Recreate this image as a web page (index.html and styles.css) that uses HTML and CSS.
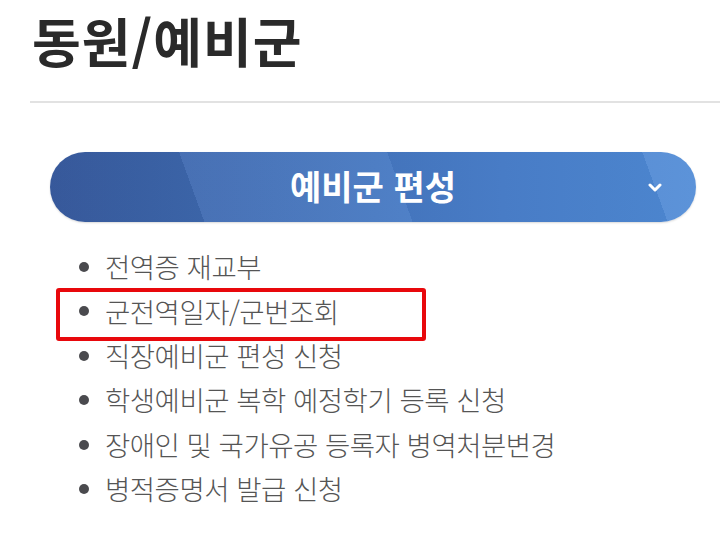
FILE: index.html
```html
<!DOCTYPE html>
<html lang="ko">
<head>
  <meta charset="UTF-8" />
  <meta name="viewport" content="width=device-width, initial-scale=1.0" />
  <title>동원/예비군</title>
  <link rel="stylesheet" href="styles.css">
</head>
<body>
  <header class="page-head">
    <h1>동원/예비군</h1>
  </header>

  <section class="menu-group">
    <button class="menu-toggle">
      <span class="menu-title">예비군 편성</span>
      <svg class="chevron" width="14" height="10" viewBox="0 0 14 10">
        <path d="M2 2 L7 7 L12 2" fill="none" stroke="#fff" stroke-width="3" stroke-linecap="round" stroke-linejoin="round"/>
      </svg>
    </button>
    <ul class="menu-list">
      <li><a href="#">전역증 재교부</a></li>
      <li class="marked"><a href="#">군전역일자/군번조회</a></li>
      <li><a href="#">직장예비군 편성 신청</a></li>
      <li><a href="#">학생예비군 복학 예정학기 등록 신청</a></li>
      <li><a href="#">장애인 및 국가유공 등록자 병역처분변경</a></li>
      <li><a href="#">병적증명서 발급 신청</a></li>
    </ul>
  </section>
</body>
</html>
```

FILE: styles.css
```css
body {
  margin: 0;
  font-family: "Noto Sans CJK KR", "Noto Sans", sans-serif;
  background-color: #FFFFFF;
  color: #333;
}
.page-head {
  margin-left: 30px;
  padding: 4px 0 25px 2px;
  border-bottom: 2px solid #E2E2E2;
}
.page-head h1 {
  margin: 0;
  font-size: 53px;
  font-weight: 700;
  line-height: 72px;
  letter-spacing: 1px;
  color: #2A2A2A;
}
.menu-group {
  padding: 49px 25px 0 50px;
}
.menu-toggle {
  position: relative;
  overflow: hidden;
  width: 646px;
  height: 70px;
  border: none;
  border-radius: 35px;
  display: flex;
  align-items: center;
  justify-content: center;
  background: linear-gradient(90deg, #3A5EA4 0%, #4170B8 35%, #4A80CC 70%, #4E8AD6 100%);
  box-shadow: 0 1px 2px rgba(0, 0, 0, 0.15);
  cursor: pointer;
  font-family: inherit;
}
.menu-toggle::before {
  content: "";
  position: absolute;
  inset: 0;
  background: linear-gradient(70deg,
    rgba(0, 0, 0, 0.06) 0%, rgba(0, 0, 0, 0.06) 23%,
    rgba(255, 255, 255, 0.05) 23%, rgba(255, 255, 255, 0.05) 54%,
    rgba(0, 0, 0, 0.03) 54%, rgba(0, 0, 0, 0.03) 92%,
    rgba(255, 255, 255, 0.08) 92%);
}
.menu-title {
  position: relative;
  color: #FFFFFF;
  font-size: 34px;
  font-weight: 700;
  letter-spacing: 0;
  margin-top: -4px;
}
.chevron {
  position: absolute;
  right: 34px;
  top: 31px;
}
.menu-list {
  list-style: none;
  margin: 22px 0 0;
  padding: 0;
}
.menu-list li {
  position: relative;
  height: 44.4px;
  display: flex;
  align-items: center;
  padding-left: 55px;
}
.menu-list li::before {
  content: "";
  position: absolute;
  left: 29px;
  top: 18px;
  width: 10px;
  height: 10px;
  border-radius: 50%;
  background-color: #4A4A4E;
}
.menu-list a {
  color: #555;
  font-size: 27.5px;
  font-weight: 300;
  text-decoration: none;
  letter-spacing: -0.5px;
}
.menu-list li.marked::after {
  content: "";
  position: absolute;
  left: 6px;
  top: 0;
  width: 362px;
  height: 45px;
  border: 4px solid #E8080C;
  border-radius: 3px;
}
```
